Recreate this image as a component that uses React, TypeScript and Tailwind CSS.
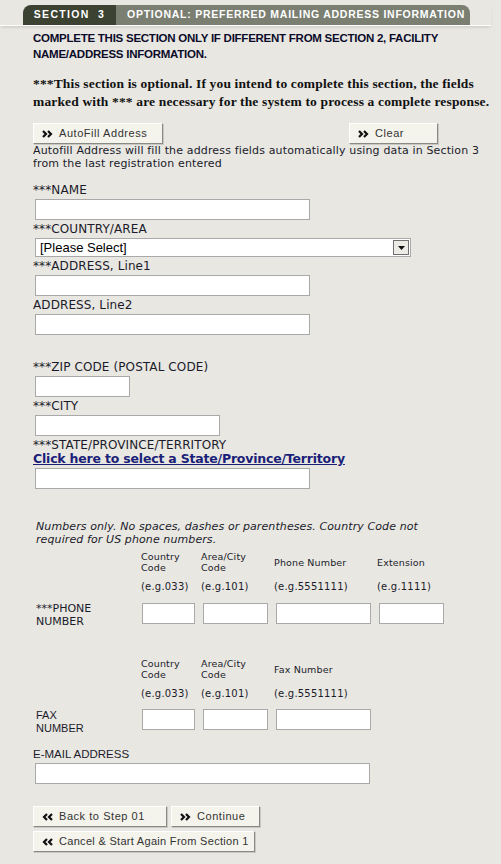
import React from "react";

// ─── Small pieces ─────────────────────────────────────────────

function Chevrons({ dir = "right" }: { dir?: "right" | "left" }) {
  return (
    <svg
      width="11"
      height="8"
      viewBox="0 0 11 8"
      className={`shrink-0 ${dir === "left" ? "rotate-180" : ""}`}
      aria-hidden="true"
    >
      <path d="M1 1l3 3-3 3M6 1l3 3-3 3" fill="none" stroke="#111" strokeWidth="2.2" />
    </svg>
  );
}

function Btn({
  label,
  dir = "right",
  tight = false,
  className = "",
}: {
  label: string;
  dir?: "right" | "left";
  tight?: boolean;
  className?: string;
}) {
  return (
    <button
      type="button"
      className={`flex h-[21px] items-center gap-[6px] whitespace-nowrap border border-t-white border-l-white border-r-[#8a8a84] border-b-[#8a8a84] bg-[#f4f3ec] pl-[8px] font-['Liberation_Sans',Arial,sans-serif] text-[11px] text-[#333] shadow-[1px_1px_0_#c9c8c2] ${tight ? "tracking-[0.3px]" : "tracking-[0.55px]"} ${className}`}
    >
      <Chevrons dir={dir} />
      {label}
    </button>
  );
}

function Field({ w, className = "" }: { w: string; className?: string }) {
  return (
    <input
      type="text"
      className={`block h-[21px] border border-[#a9a9a9] bg-white ${w} ${className}`}
    />
  );
}

function Label({ children, className = "" }: { children: React.ReactNode; className?: string }) {
  return <div className={`h-[13px] text-[12px] leading-[13px] tracking-[0.1px] ${className}`}>{children}</div>;
}

// ─── Page ─────────────────────────────────────────────────────

export default function App() {
  return (
    <div className="min-h-[864px] w-[501px] bg-[#e8e7e2] pt-[5px] font-['DejaVu_Sans',Verdana,sans-serif] text-[11px] text-[#1b1b2a]">
      {/* Section tab */}
      <div className="mr-[10px] border-b border-white shadow-[0_2px_3px_-1px_rgba(0,0,0,0.15)]">
        <div className="ml-[23px] flex h-[20px] w-[447px] overflow-hidden whitespace-nowrap rounded-t-[8px] font-['Liberation_Sans',Arial,sans-serif] text-[10.5px] font-bold text-white">
          <div className="flex w-[93px] items-center justify-center bg-[#3b4232] tracking-[1.3px]">SECTION&nbsp;&nbsp;3</div>
          <div className="flex flex-1 items-center bg-[#7b7f72] pl-[11px] tracking-[0.75px]">
            OPTIONAL: PREFERRED MAILING ADDRESS INFORMATION
          </div>
        </div>
      </div>

      <div className="pl-[33px]">
        <p className="mt-[4px] font-['Liberation_Sans',Arial,sans-serif] text-[11.5px] font-bold leading-[16px] tracking-[-0.25px] text-[#0c0c2a]">
          COMPLETE THIS SECTION ONLY IF DIFFERENT FROM SECTION 2, FACILITY NAME/ADDRESS INFORMATION.
        </p>

        <p className="mt-[13px] font-['Liberation_Serif','Times_New_Roman',serif] text-[13.5px] font-bold leading-[18px] tracking-[0.15px] text-[#111]">
          ***This section is optional. If you intend to complete this section, the fields marked with *** are necessary for the system to process a complete response.
        </p>

        <div className="mt-[12px] flex">
          <Btn label="AutoFill Address" className="w-[130px]" />
          <Btn label="Clear" className="ml-[186px] w-[89px]" />
        </div>
        <p className="max-w-[455px] leading-[13px] tracking-[0.15px]">
          Autofill Address will fill the address fields automatically using data in Section 3 from the last registration entered
        </p>

        <Label className="mt-[14px]">***NAME</Label>
        <Field w="w-[275px]" className="ml-[2px] mt-[2px]" />

        <Label className="mt-[3px]">***COUNTRY/AREA</Label>
        <div className="ml-[2px] mt-[2px] flex h-[19px] w-[376px] items-center justify-between border border-[#a9a9a9] bg-white">
          <span className="pl-[4px] font-['Liberation_Sans',Arial,sans-serif] text-[13px] text-black">[Please Select]</span>
          <span className="mr-[1px] flex h-[15px] w-[16px] items-center justify-center border border-[#6f6f6f] bg-[#ecebe6]">
            <svg width="7" height="4" viewBox="0 0 7 4"><path d="M0 0h7L3.5 4z" fill="#111" /></svg>
          </span>
        </div>

        <Label className="mt-[3px]">***ADDRESS, Line1</Label>
        <Field w="w-[275px]" className="ml-[2px] mt-[2px]" />

        <Label className="mt-[3px]">ADDRESS, Line2</Label>
        <Field w="w-[275px]" className="ml-[2px] mt-[2px]" />

        <Label className="mt-[26px]">***ZIP CODE (POSTAL CODE)</Label>
        <Field w="w-[95px]" className="ml-[2px] mt-[2px]" />

        <Label className="mt-[3px]">***CITY</Label>
        <Field w="w-[185px]" className="ml-[2px] mt-[2px]" />

        <Label className="mt-[3px]">***STATE/PROVINCE/TERRITORY</Label>
        <a href="#" className="block h-[14px] font-['DejaVu_Sans',Verdana,sans-serif] text-[12.5px] font-bold leading-[14px] tracking-[-0.2px] text-[#1b1f78] underline">
          Click here to select a State/Province/Territory
        </a>
        <Field w="w-[275px]" className="ml-[2px] mt-[2px]" />

        <p className="ml-[3px] mt-[31px] max-w-[400px] italic leading-[13px] tracking-[0.1px]">
          Numbers only. No spaces, dashes or parentheses. Country Code not required for US phone numbers.
        </p>

        {/* Phone */}
        <div className="ml-[3px] mt-[5px] grid grid-cols-[105px_60px_73px_103px_70px] text-[9.5px] leading-[11px] tracking-[0.15px]">
          <div />
          <div className="self-center">Country<br />Code</div>
          <div className="self-center">Area/City<br />Code</div>
          <div className="self-center">Phone Number</div>
          <div className="self-center">Extension</div>

          <div />
          <div className="mt-[8px] text-[10px] tracking-[0.2px]">(e.g.033)</div>
          <div className="mt-[8px] text-[10px] tracking-[0.2px]">(e.g.101)</div>
          <div className="mt-[8px] text-[10px] tracking-[0.2px]">(e.g.5551111)</div>
          <div className="mt-[8px] text-[10px] tracking-[0.2px]">(e.g.1111)</div>

          <div className="mt-[10px] text-[11px] leading-[13px] tracking-normal">***PHONE<br />NUMBER</div>
          <Field w="w-[53px]" className="ml-[1px] mt-[11px]" />
          <Field w="w-[65px]" className="ml-[2px] mt-[11px]" />
          <Field w="w-[95px]" className="ml-[2px] mt-[11px]" />
          <Field w="w-[65px]" className="ml-[2px] mt-[11px]" />
        </div>

        {/* Fax */}
        <div className="ml-[3px] mt-[30px] grid grid-cols-[105px_60px_73px_103px] text-[9.5px] leading-[11px] tracking-[0.15px]">
          <div />
          <div className="self-center">Country<br />Code</div>
          <div className="self-center">Area/City<br />Code</div>
          <div className="self-center">Fax Number</div>

          <div />
          <div className="mt-[8px] text-[10px] tracking-[0.2px]">(e.g.033)</div>
          <div className="mt-[8px] text-[10px] tracking-[0.2px]">(e.g.101)</div>
          <div className="mt-[8px] text-[10px] tracking-[0.2px]">(e.g.5551111)</div>

          <div className="mt-[10px] font-['Liberation_Sans',Arial,sans-serif] text-[11px] leading-[13px] tracking-normal">FAX<br />NUMBER</div>
          <Field w="w-[53px]" className="ml-[1px] mt-[10px] self-start" />
          <Field w="w-[65px]" className="ml-[2px] mt-[10px] self-start" />
          <Field w="w-[95px]" className="ml-[2px] mt-[10px] self-start" />
        </div>

        <div className="mt-[13px] font-['Liberation_Sans',Arial,sans-serif] text-[11.5px] leading-[13px]">E-MAIL ADDRESS</div>
        <Field w="w-[335px]" className="ml-[2px] mt-[2px]" />

        <div className="mt-[22px] flex gap-[4px]">
          <Btn label="Back to Step 01" dir="left" className="w-[134px]" />
          <Btn label="Continue" className="w-[89px]" />
        </div>
        <Btn label="Cancel & Start Again From Section 1" dir="left" tight className="mt-[4px] w-[222px]" />
      </div>
    </div>
  );
}
